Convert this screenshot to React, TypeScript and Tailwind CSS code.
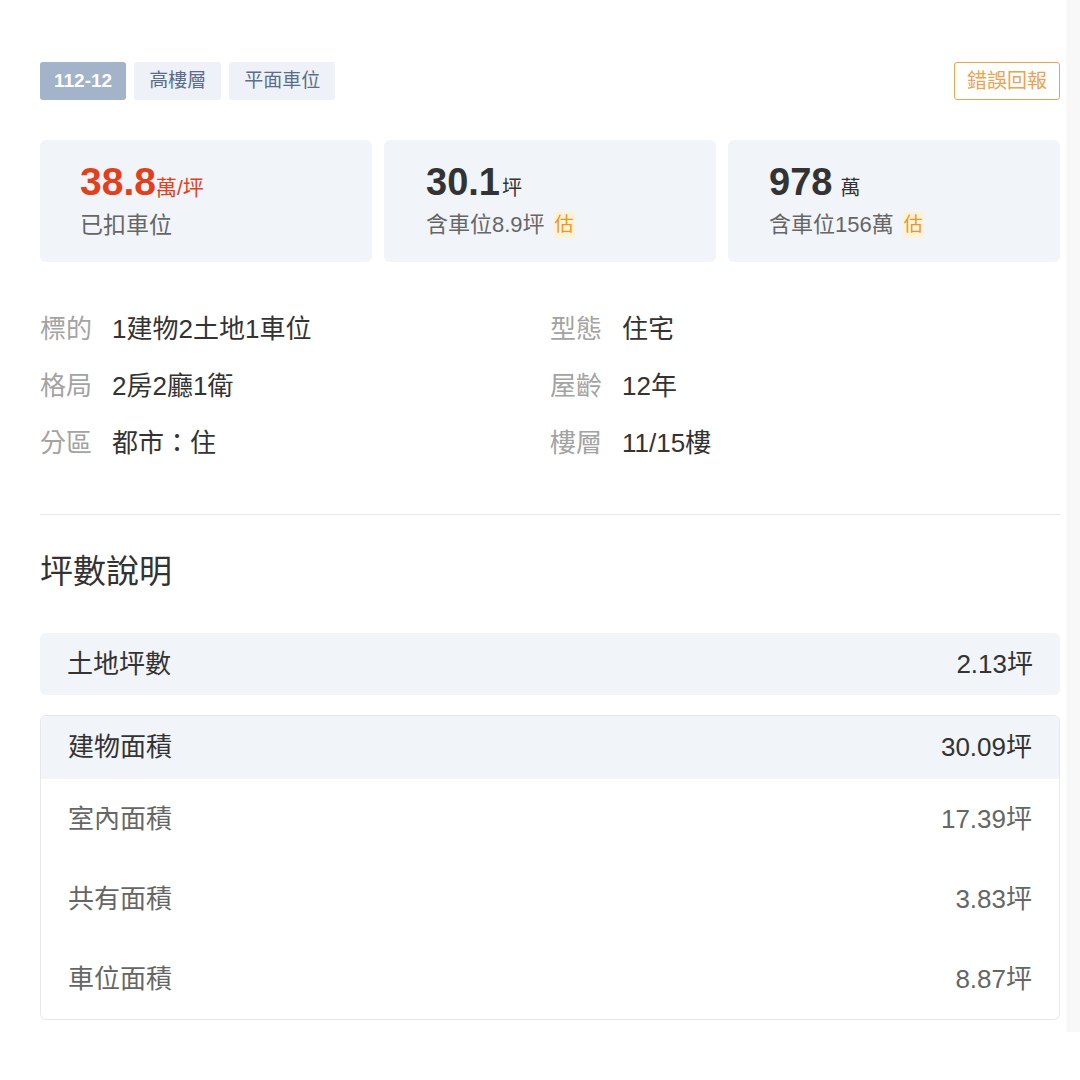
import React from "react";

const F = { fontFamily: '"Liberation Sans", "Noto Sans CJK TC", sans-serif' };

function Est() {
  return (
    <span className="ml-[9px] inline-flex items-center rounded-[3px] bg-[#fdf1d6] px-[1px] text-[19px] leading-[26px] text-[#e39a2b]">
      估
    </span>
  );
}

function Info({ label, value }: { label: string; value: string }) {
  return (
    <div className="flex h-[57px] items-center gap-[20px] text-[26px]">
      <span className="text-[#a3a3a3]">{label}</span>
      <span className="text-[#333]">{value}</span>
    </div>
  );
}

function Row({ label, value, head }: { label: string; value: string; head?: boolean }) {
  return (
    <div
      className={
        head
          ? "flex h-[63px] items-center justify-between bg-[#f1f4f9] px-[27px] text-[26px] text-[#333]"
          : "flex h-[80px] items-center justify-between px-[27px] text-[26px] text-[#666]"
      }
    >
      <span>{label}</span>
      <span>{value}</span>
    </div>
  );
}

export default function App() {
  return (
    <div style={F} className="flex h-[1080px] w-[1080px] bg-white">
      <div className="w-[1066px] pl-[40px] pr-[6px] pt-[62px]">
        <div className="flex h-[38px] items-center justify-between">
          <div className="flex gap-[8px]">
            <span className="flex h-[38px] items-center rounded-[3px] bg-[#a3b3c9] px-[14px] text-[19px] font-bold text-white">
              112-12
            </span>
            <span className="flex h-[38px] items-center rounded-[3px] bg-[#eef2f8] px-[15px] text-[19px] text-[#5b6d88]">
              高樓層
            </span>
            <span className="flex h-[38px] items-center rounded-[3px] bg-[#eef2f8] px-[15px] text-[19px] text-[#5b6d88]">
              平面車位
            </span>
          </div>
          <span className="flex h-[38px] items-center rounded-[3px] border border-[#e9a453] px-[12px] text-[20px] text-[#e9a453]">
            錯誤回報
          </span>
        </div>

        <div className="mt-[40px] grid h-[122px] grid-cols-3 gap-[12px]">
          <div className="rounded-[6px] bg-[#f1f4f9] pl-[40px] pt-[22px]">
            <div className="flex items-baseline leading-[40px]">
              <span className="text-[39px] font-bold text-[#e2401d]">38.8</span>
              <span className="text-[21px] text-[#e2401d]">萬/坪</span>
            </div>
            <div className="mt-[2px] text-[23px] leading-[30px] text-[#666]">已扣車位</div>
          </div>
          <div className="rounded-[6px] bg-[#f1f4f9] pl-[42px] pt-[22px]">
            <div className="flex items-baseline leading-[40px]">
              <span className="text-[38px] font-bold text-[#333]">30.1</span>
              <span className="ml-[2px] text-[20px] text-[#333]">坪</span>
            </div>
            <div className="mt-[2px] flex items-center text-[22px] leading-[30px] text-[#666]">
              含車位8.9坪<Est />
            </div>
          </div>
          <div className="rounded-[6px] bg-[#f1f4f9] pl-[41px] pt-[22px]">
            <div className="flex items-baseline leading-[40px]">
              <span className="text-[38px] font-bold text-[#333]">978</span>
              <span className="ml-[8px] text-[20px] text-[#333]">萬</span>
            </div>
            <div className="mt-[2px] flex items-center text-[22px] leading-[30px] text-[#666]">
              含車位156萬<Est />
            </div>
          </div>
        </div>

        <div className="mt-[39px] grid grid-cols-2">
          <Info label="標的" value="1建物2土地1車位" />
          <Info label="型態" value="住宅" />
          <Info label="格局" value="2房2廳1衛" />
          <Info label="屋齡" value="12年" />
          <Info label="分區" value="都市：住" />
          <Info label="樓層" value="11/15樓" />
        </div>

        <div className="mt-[42px] h-px bg-[#e8e8e8]" />

        <div className="mt-[37px] text-[33px] leading-[40px] text-[#333]">坪數說明</div>

        <div className="mt-[41px] flex h-[62px] items-center justify-between rounded-[6px] bg-[#f1f4f9] px-[27px] text-[26px] text-[#333]">
          <span>土地坪數</span>
          <span>2.13坪</span>
        </div>

        <div className="mt-[20px] overflow-hidden rounded-[6px] border border-[#e6e8ec]">
          <Row head label="建物面積" value="30.09坪" />
          <Row label="室內面積" value="17.39坪" />
          <Row label="共有面積" value="3.83坪" />
          <Row label="車位面積" value="8.87坪" />
        </div>
      </div>
      <div className="h-[1032px] w-[14px] bg-[#f8f8f9]" />
    </div>
  );
}
